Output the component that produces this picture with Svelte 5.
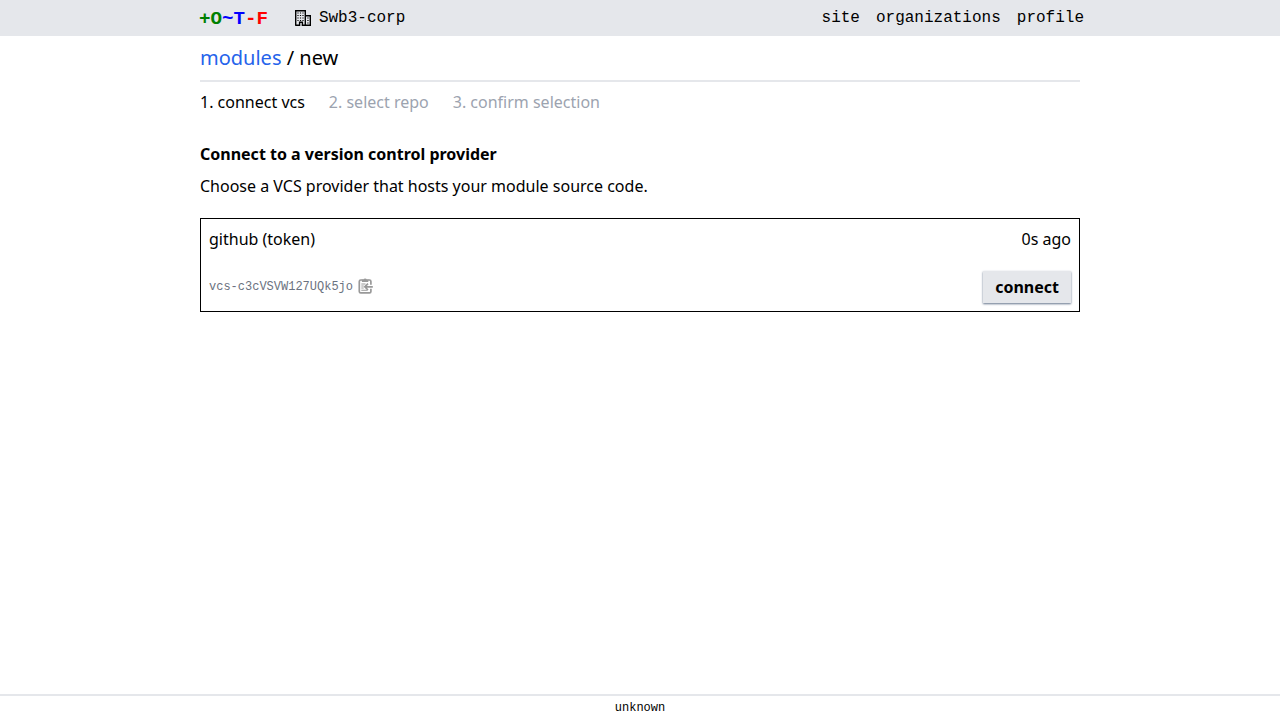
<script>
  const steps = ['1. connect vcs', '2. select repo', '3. confirm selection'];
  const links = ['site', 'organizations', 'profile'];
</script>

<div class="page">
  <header>
    <div class="bar">
      <a class="logo" href="#home"><span class="g">+O</span><span class="b">~T</span><span class="r">-F</span></a>
      <a class="org" href="#org">
        <svg width="16" height="16" viewBox="0 0 16 16" fill="none" stroke="#000" stroke-width="1.4">
          <path d="M.7 15.3V.7h9.6v14.6M10.3 5.7h5v9.6h-5M.2 15.3h4.4v-3.1h2.8v3.1h3" />
          <path stroke-width="1.2" d="M2.4 3h1.2M4.9 3h1.2M7.4 3h1.2M2.4 5.5h1.2M4.9 5.5h1.2M7.4 5.5h1.2M2.4 8h1.2M4.9 8h1.2M7.4 8h1.2M2.4 10.5h1.2M4.9 10.5h1.2M7.4 10.5h1.2M12.3 8h1.3M12.3 10.5h1.3M12.3 13h1.3" />
        </svg>
        <span>Swb3-corp</span>
      </a>
      <nav>{#each links as l}<a href="#{l}">{l}</a>{/each}</nav>
    </div>
  </header>
  <main>
    <div class="title"><a href="#modules">modules</a> / new</div>
    <div class="steps">{#each steps as s, i}<span class:active={i === 0}>{s}</span>{/each}</div>
    <h3>Connect to a version control provider</h3>
    <p>Choose a VCS provider that hosts your module source code.</p>
    <div class="item">
      <div class="row"><span>github (token)</span><span>0s ago</span></div>
      <div class="row">
        <div class="ident">
          <span>vcs-c3cVSVW127UQk5jo</span>
          <svg width="16" height="16" viewBox="0 0 16 16" fill="none" stroke="#999" stroke-width="1.7">
            <path d="M4.5 2H2.7Q1.3 2 1.3 3.4v10q0 1.4 1.4 1.4h8.8q1.4 0 1.4-1.4v-2.6M9.7 2h1.8q1.4 0 1.4 1.4v3.4" />
            <path fill="#999" stroke="none" d="M3.9 1.2h1.5Q5.8.4 7.1.4t1.7.8h1.5v2.9H3.9z" />
            <path stroke-width="1.1" d="M3.3 6h4.2M3.3 8h2.4M3.3 10h2.4M3.3 12.2h6.2" />
            <path d="M14.8 8.8H7.2M10 5.6 6.8 8.8l3.2 3.2" />
          </svg>
        </div>
        <button>connect</button>
      </div>
    </div>
  </main>
  <footer>unknown</footer>
</div>

<style>
  :global(body) { margin: 0; }
  .page { box-sizing: border-box; height: 720px; display: flex; flex-direction: column; font: 16px/24px "Noto Sans", sans-serif; color: #000; background: #fff; }
  a { color: inherit; text-decoration: none; }
  header { background: #e5e7eb; height: 36px; font-family: "Liberation Mono", monospace; }
  .bar { width: 884px; margin-left: 200px; height: 36px; display: flex; align-items: center; }
  .logo { font-size: 19.2px; font-weight: 700; margin-left: -1px; margin-top: 2px; }
  .g { color: green; } .b { color: blue; } .r { color: red; }
  .org { display: flex; align-items: center; gap: 8px; margin-left: 26.8px; }
  nav { display: flex; gap: 16px; margin-left: auto; }
  main { width: 880px; margin: 0 auto; flex: 1; }
  .title { height: 44px; line-height: 44px; font-size: 20px; border-bottom: 2px solid #e5e7eb; }
  .title a { color: #2563eb; }
  .steps { display: flex; gap: 24px; margin-top: 8px; color: #9ca3af; }
  .steps .active { color: #000; }
  h3 { font-size: 16px; line-height: 24px; margin: 28px 0 8px; }
  p { margin: 0 0 20px; }
  .item { box-sizing: border-box; height: 94px; border: 1px solid #000; padding: 8px; display: flex; flex-direction: column; justify-content: space-between; }
  .row { display: flex; justify-content: space-between; align-items: center; }
  .ident { display: flex; align-items: center; gap: 5px; font: 12px/16px "Liberation Mono", monospace; color: #6b7280; }
  .ident svg { margin-bottom: 2px; }
  button { border: 0; padding: 4px 12px; height: 32px; background: #e5e7eb; font: 700 16px/24px "Noto Sans", sans-serif; color: #000; box-shadow: 0 1px 2px #64748b; }
  footer { box-sizing: border-box; height: 26px; border-top: 2px solid #e5e7eb; text-align: center; font: 12px/24px "Liberation Mono", monospace; }
</style>
